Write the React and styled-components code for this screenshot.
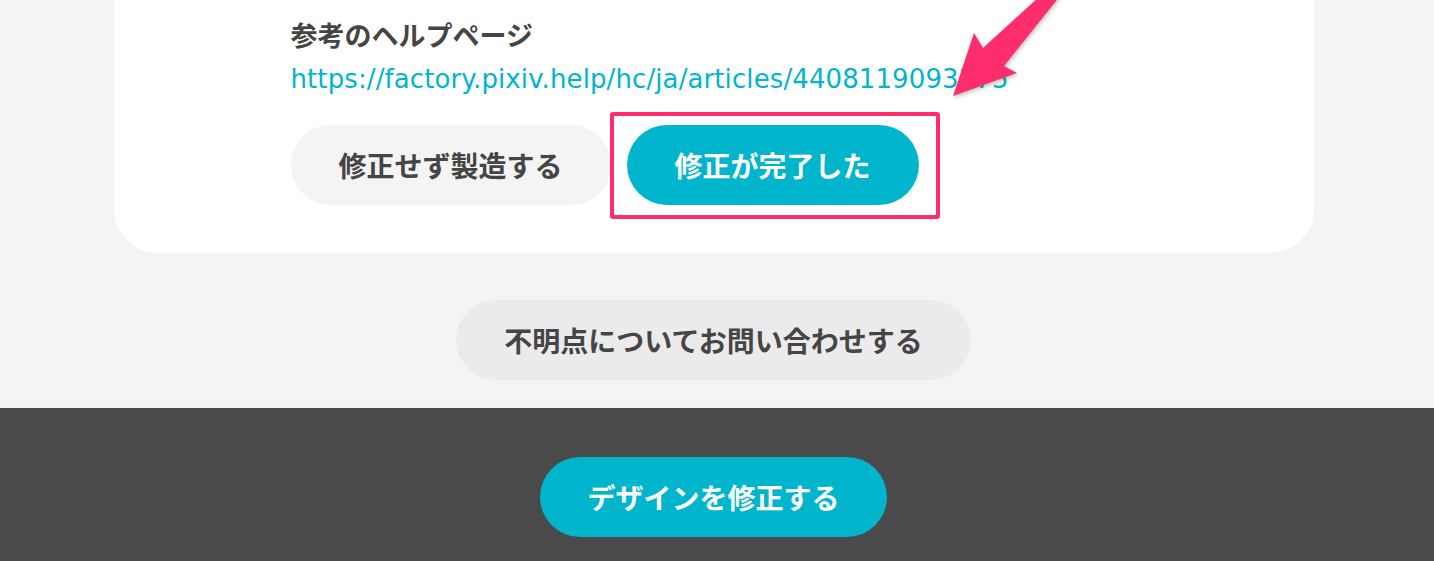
import styled, { createGlobalStyle } from "styled-components";

const GlobalStyle = createGlobalStyle`
  body {
    margin: 0;
    background-color: #f4f4f4;
    font-family: "Noto Sans CJK JP", "DejaVu Sans", sans-serif;
    color: #454545;
  }
`;

const StyledPage = styled.div`
  position: relative;
  overflow: hidden;
`;

const StyledInner = styled.div`
  width: 1427px;
  display: flex;
  flex-direction: column;
  align-items: center;
`;

const StyledCard = styled.section`
  width: 1200px;
  box-sizing: border-box;
  background-color: #ffffff;
  border-radius: 0 0 44px 44px;
  padding: 15px 0 48px 177px;
`;

const StyledHeading = styled.h3`
  margin: 0 0 4px;
  font-size: 27px;
  line-height: 40px;
  font-weight: 700;
  color: #454545;
`;

const StyledLink = styled.a`
  display: block;
  font-family: "DejaVu Sans", "Noto Sans CJK JP", sans-serif;
  font-size: 26px;
  line-height: 40px;
  letter-spacing: 0.1px;
  color: #00b5cc;
  text-decoration: none;
`;

const StyledRow = styled.div`
  display: flex;
  gap: 16px;
  margin-top: 26px;
`;

const colors = {
  light: { bg: "#f4f4f4", fg: "#454545" },
  contact: { bg: "#ebebeb", fg: "#454545" },
  primary: { bg: "#00b5cc", fg: "#ffffff" },
};

const StyledPill = styled.button`
  height: 80px;
  padding: 0 ${({ $pad }) => $pad || 48}px;
  border: none;
  border-radius: 40px;
  font-family: "Noto Sans CJK JP", sans-serif;
  font-size: 28px;
  font-weight: 700;
  white-space: nowrap;
  background-color: ${({ $variant }) => colors[$variant].bg};
  color: ${({ $variant }) => colors[$variant].fg};
  cursor: pointer;
`;

const StyledMarked = styled.div`
  position: relative;
`;

const StyledHighlight = styled.span`
  position: absolute;
  top: -13px;
  left: -17px;
  right: -21px;
  bottom: -14px;
  border: 4px solid #ff2d6e;
  border-radius: 3px;
  pointer-events: none;
`;

const StyledContact = styled.div`
  display: flex;
  justify-content: center;
  padding: 47px 0 28px;
`;

const StyledFooter = styled.footer`
  background-color: #4a4a4a;
  padding: 49px 0 30px;
`;

const StyledArrow = styled.svg`
  position: absolute;
  top: 0;
  left: 940px;
  width: 130px;
  height: 110px;
  overflow: visible;
  filter: drop-shadow(1px 2px 2px rgba(0, 0, 0, 0.25));
`;

export default function App() {
  return (
    <>
      <GlobalStyle />
      <StyledPage>
        <StyledInner>
          <StyledCard>
            <StyledHeading>参考のヘルプページ</StyledHeading>
            <StyledLink href="#">
              https://factory.pixiv.help/hc/ja/articles/4408119093375
            </StyledLink>
            <StyledRow>
              <StyledPill $variant="light">修正せず製造する</StyledPill>
              <StyledMarked>
                <StyledPill $variant="primary">修正が完了した</StyledPill>
                <StyledHighlight />
              </StyledMarked>
            </StyledRow>
          </StyledCard>
          <StyledContact>
            <StyledPill $variant="contact">不明点についてお問い合わせする</StyledPill>
          </StyledContact>
        </StyledInner>
        <StyledFooter>
          <StyledInner>
            <StyledPill $variant="primary" $pad={47}>
              デザインを修正する
            </StyledPill>
          </StyledInner>
        </StyledFooter>
        <StyledArrow viewBox="940 0 130 110">
          <polygon
            points="953,96 974,33 983,48 1040,-4 1060,-4 1004,66 1017,73"
            fill="#ff2d6e"
          />
        </StyledArrow>
      </StyledPage>
    </>
  );
}
